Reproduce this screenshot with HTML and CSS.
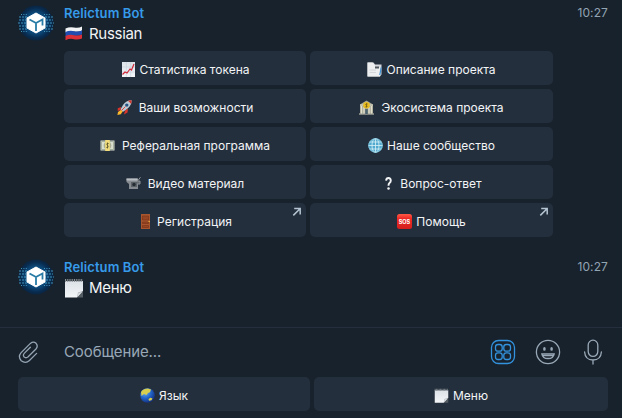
FILE: index.html
```html
<!DOCTYPE html>
<html lang="ru">
<head>
<meta charset="utf-8">
<title>Relictum Bot</title>
<link rel="stylesheet" href="styles.css">
</head>
<body>
<svg class="defs" aria-hidden="true">
  <defs>
    <radialGradient id="glow"><stop offset="0" stop-color="#2d8dbb"/><stop offset=".55" stop-color="#0d4d80"/><stop offset=".85" stop-color="#082c50"/><stop offset="1" stop-color="#0b2440"/></radialGradient>
    <linearGradient id="paper" x2="0" y2="1"><stop offset="0" stop-color="#dce2e8"/><stop offset="1" stop-color="#f4f6f8"/></linearGradient>
    <linearGradient id="red" x2="0" y2="1"><stop offset="0" stop-color="#ff5a48"/><stop offset=".3" stop-color="#ed2a24"/><stop offset="1" stop-color="#d5201e"/></linearGradient>
    <radialGradient id="sea" cx=".35" cy=".3" r=".75"><stop offset="0" stop-color="#6bb3f0"/><stop offset=".5" stop-color="#2467cc"/><stop offset="1" stop-color="#122c78"/></radialGradient>
  </defs>
  <symbol id="avatar" viewBox="0 0 36 36">
    <circle cx="18" cy="18" r="17.500" fill="url(#glow)"/>
    <g fill="none" stroke="#55b5dd" stroke-width="1.1" opacity=".75">
      <path d="M1 12h8M1 15h7M0 18h10M1 21h7M1 24h8M27 12h8M28 15h7M26 18h10M28 21h7M27 24h8" stroke-dasharray="2 1"/>
      <path d="M3 9.500h7M26 9.500h7M3 26.500h7M26 26.500h7" stroke-dasharray="1 1.4"/>
    </g>
    <path d="M18 8 27 13v10L18 28 9 23V13z" fill="#fff" stroke="#fff" stroke-linejoin="round"/>
    <path d="M11.500 14.500 18 18l6.500-3.500v6M18 18v8" fill="none" stroke="#287ca6" stroke-width="1.800"/>
  </symbol>
  <symbol id="note" viewBox="0 0 20 20">
    <path d="M1 3h18v10l-6 6.500H1z" fill="url(#paper)"/>
    <path d="M19 13l-6 6.500 1-5z" fill="#aab0b6"/><path d="M19 13l-6 6.500h6z" fill="#545c64"/><path d="M18.500 13.500l-5 5.500 .8-3.800z" fill="#dde1e5"/>
    <path d="M1 2.600h18" stroke="#8b9094" stroke-width="3" stroke-dasharray="1 .8"/>
  </symbol>
  <symbol id="arrow" viewBox="0 0 10 10"><path d="M2.200 1.500h6v6M8 1.700 1.300 8.400" fill="none" stroke="#b4c4d2" stroke-width="1.500"/></symbol>
</svg>

<main class="chat">
  <article class="message message--first">
    <svg class="avatar"><use href="#avatar"/></svg>
    <div class="content">
      <header class="head"><span class="name">Relictum Bot</span><time class="time">10:27</time></header>
      <p class="text">
        <svg class="emoji-lg" viewBox="0 0 20 20"><path d="M1.500 4.500q4-2 8.500-1t8-1v4q-4 2-8 1t-8.500 1z" fill="#f2f3f5"/><path d="M1.500 8q4-1.800 8.500-.8t8-.8v4.200q-4 1.600-8 .8t-8.500 1z" fill="#214db0"/><path d="M1.500 12q4-1.800 8.500-.8t8-.8v4q-4 1.800-8 .8t-8.500 1z" fill="#dc3039"/></svg>
        <span>Russian</span>
      </p>
      <div class="keyboard">
        <div class="button"><svg class="emoji" viewBox="0 0 15 15"><path d="M1 0h13v15H1z" fill="url(#paper)"/><path d="M1 5h13M1 10h13M5.300 0v15M9.700 0v15" stroke="#bfcbd8" stroke-width=".5"/><path d="M1.500 12.500 4 10l2 1 3-4 1.500 1L13 2" fill="none" stroke="#d02a3a" stroke-width="1.200"/></svg><span>Статистика токена</span></div>
        <div class="button"><svg class="emoji" viewBox="0 0 15 15"><path d="M.5.500h6l1.500 2h6.500v10l-1.500 2H.5z" fill="#d5d9de"/><path d="M.5.500h5L8 3.500v2h5v9H.5z" fill="#eceef0"/><path d="M8 4.500h4v2H8z" fill="#505860"/><path d="M2.500 8H9M2.500 10.500H9" stroke="#c8ccd0" stroke-width=".7"/><path d="M14.200 5.500 12.800 13" stroke="#4293d5" stroke-width="1.200"/></svg><span>Описание проекта</span></div>
        <div class="button button--wide"><svg class="emoji" viewBox="0 0 15 15"><path d="M4 7 .8 8.200.7 11l3-1zM8 10.500l-1 4 3.500-2 .5-4z" fill="#d8342b"/><path d="M4.500 9.500 1 12l-.6 3 3.400-.8L6 11z" fill="#fbb92b"/><path d="M14.700.3Q9 .5 6 5L3.600 9.200l2.500 2.500L10 9Q14.500 6 14.700.3z" fill="#bcc9d3"/><path d="M14.700.3 11 .8l3.200 3.200z" fill="#d8342b"/><circle cx="9.800" cy="5.100" r="1.700" fill="#245385"/><path d="m4.500 10.500 4-4" stroke="#de443a"/></svg><span>Ваши возможности</span></div>
        <div class="button button--wide"><svg class="emoji" viewBox="0 0 15 15"><path d="M7.500.5 14 4.500v9H1v-9z" fill="#a9aa98"/><path d="M1 5h13M0 14h15" stroke="#d7d5c2" stroke-width="1.200"/><path d="M2.500 6v7.500M12.500 6v7.500M5 7v6.500M10 7v6.500" stroke="#e2dfcc" stroke-width="1.300"/><path d="M6.200 9h2.600v5H6.200z" fill="#4d6570"/><circle cx="7.500" cy="5.300" r="3.300" fill="#e9bd1f"/><path d="M8.700 4H7q-1 .7.500 1.300t.300 1.500H6.300M7.500 3.200v4.200" fill="none" stroke="#715a18" stroke-width=".7"/></svg><span>Экосистема проекта</span></div>
        <div class="button button--wide"><svg class="emoji" viewBox="0 0 15 15"><path d="M.5 2.500h14v10H.5z" fill="#d9dfcf"/><path d="M1.500 3.500h12v8h-12z" fill="none" stroke="#9ba594" stroke-width=".8"/><circle cx="7.500" cy="7.500" r="3.800" fill="#a9ae94"/><path d="M5.200 2h4.600v11H5.200z" fill="#f1dc79"/><path d="M8.700 5.500H7q-.8.900.500 1.800t.3 2.200H6.300M7.500 4.500v6" fill="none" stroke="#4e4a28" stroke-width=".7"/></svg><span>Реферальная программа</span></div>
        <div class="button"><svg class="emoji" viewBox="0 0 15 15"><circle cx="7.500" cy="7.500" r="7.200" fill="#51a9cf"/><g fill="none" stroke="#d9f2f7" stroke-width=".8"><ellipse cx="7.500" cy="7.500" rx="3.500" ry="7"/><path d="M7.500.5v14M.5 7.500h14M1.500 4h12M1.500 11h12"/><circle cx="7.500" cy="7.500" r="6.800" stroke="#8dccdf"/></g></svg><span>Наше сообщество</span></div>
        <div class="button button--wide"><svg class="emoji" viewBox="0 0 15 15"><path d="M.5 2.500h11.500v10.500H3V8L.5 6z" fill="#858b91"/><path d="M.5 2.500h11v2H.5z" fill="#b9bec3"/><path d="M11 5h3v3h-3M12 4.500 14.500 1.200" fill="#646b71" stroke="#8b9197"/><path d="M5 6h6v5H5z" fill="#5b6268"/><circle cx="8" cy="8.500" r="1.700" fill="#252d33"/></svg><span>Видео материал</span></div>
        <div class="button button--question"><svg class="emoji" viewBox="0 0 15 15"><path d="M5.100 4.600Q5.300 2 7.500 2t2.300 2.600Q9.800 6.300 8.300 7.300 7.500 8 7.500 9.700" fill="none" stroke="#f2f4f5" stroke-width="1.900"/><circle cx="7.500" cy="12.600" r="1.250" fill="#f2f4f5"/></svg><span>Вопрос-ответ</span></div>
        <div class="button"><svg class="emoji" viewBox="0 0 15 15"><path d="M3 0h9v15H3z" fill="#a9552e"/><path d="M4.500 2h6v4h-6zM4.500 8h6v1.500h-6zM4.500 11.500h6v2h-6z" fill="#984523" stroke="#753316" stroke-width=".6"/><circle cx="11.200" cy="7.500" r=".8" fill="#e4b13d"/></svg><span>Регистрация</span><svg class="link"><use href="#arrow"/></svg></div>
        <div class="button"><svg class="emoji" viewBox="0 0 15 15"><rect width="15" height="15" rx="2.500" fill="url(#red)"/><text class="sos" x="7.500" y="9.700" text-anchor="middle">SOS</text></svg><span>Помощь</span><svg class="link"><use href="#arrow"/></svg></div>
      </div>
    </div>
  </article>

  <article class="message">
    <svg class="avatar"><use href="#avatar"/></svg>
    <div class="content">
      <header class="head"><span class="name">Relictum Bot</span><time class="time">10:27</time></header>
      <p class="text"><svg class="emoji-lg"><use href="#note"/></svg><span>Меню</span></p>
    </div>
  </article>
</main>

<footer class="composer">
  <div class="entry">
    <svg class="clip" viewBox="0 0 24 26"><path d="M20.300 14.500 12.500 22.300Q8.200 26.100 3.500 22.500-.3 18.200 3.200 13.900L13.500 3.600Q16.800 1 19.700 3.500 22.300 6.600 19.600 9.700L10.800 18.500Q8.700 20 6.700 18.500 5 16.500 6.800 14.500L13.500 7.800"/></svg>
    <span class="placeholder">Сообщение...</span>
    <svg class="tool tool--active" viewBox="0 0 26 26"><rect x="1.500" y="1.500" width="23" height="23" rx="7"/><rect x="5.500" y="5.500" width="6.700" height="6.700" rx="2.500"/><rect x="13.800" y="5.500" width="6.700" height="6.700" rx="2.500"/><rect x="5.500" y="13.800" width="6.700" height="6.700" rx="2.500"/><rect x="13.800" y="13.800" width="6.700" height="6.700" rx="2.500"/></svg>
    <svg class="tool" viewBox="0 0 26 26"><circle cx="13" cy="13" r="11.600"/><path d="M6.800 14.800h12.400Q18.300 19.500 13 19.500T6.800 14.800zM8 16.500h10"/><ellipse class="eye" cx="9.400" cy="9.900" rx="1.300" ry="1.900"/><ellipse class="eye" cx="16.600" cy="9.900" rx="1.300" ry="1.900"/></svg>
    <svg class="tool" viewBox="0 0 26 26"><rect x="8.200" y="1.200" width="9.600" height="16.200" rx="4.800"/><path d="M4.600 13Q5.200 21 13 21T21.400 13M13 21v4"/></svg>
  </div>
  <div class="menu">
    <div class="button"><svg class="emoji" viewBox="0 0 15 15"><circle cx="7.500" cy="7.500" r="7.300" fill="url(#sea)"/><path d="M1 4Q3 .5 8 .4l3 1-1 2.800-2 .8-1.500 2L4 6 1.500 8zM8.500 11l2-1.200 2 .7-1 1.800-2.500.4z" fill="#d9cf4e"/></svg><span>Язык</span></div>
    <div class="button"><svg class="emoji"><use href="#note"/></svg><span>Меню</span></div>
  </div>
</footer>
</body>
</html>
```
FILE: styles.css
```css
* { box-sizing: border-box; }
body {
  margin: 0;
  width: 622px;
  height: 418px;
  overflow: hidden;
  display: flex;
  flex-direction: column;
  background: #18222c;
  color: #f2f4f6;
  font-family: Inter, "Noto Sans", sans-serif;
}
svg { display: block; flex: none; }
.defs { position: absolute; width: 0; height: 0; }
.chat { height: 327px; padding: 4px 14px 0 18px; }
.message { display: flex; gap: 10px; }
.message--first { height: 254px; }
.avatar { width: 36px; height: 36px; margin-top: 1px; }
.content { flex: 1; }
.head { display: flex; justify-content: space-between; height: 19px; line-height: 19px; }
.name { color: #369bea; font-size: 13px; font-weight: 600; letter-spacing: .1px; }
.time { color: #93a4b3; font-size: 12px; line-height: 18px; letter-spacing: .1px; }
.text { display: flex; align-items: center; gap: 5px; height: 21px; margin: 0; font-size: 15px; line-height: 21px; letter-spacing: -.3px; }
.emoji-lg { width: 20px; height: 20px; }
.keyboard {
  display: grid;
  grid-template-columns: 242px 243px;
  grid-auto-rows: 34px;
  gap: 4px;
  margin-top: 7px;
}
.button {
  position: relative;
  display: flex;
  align-items: center;
  justify-content: center;
  gap: 4px;
  padding-top: 3px;
  border-radius: 5px;
  background: #242f3d;
  font-size: 12px;
  line-height: 16px;
  white-space: nowrap;
}
.button--wide { gap: 7px; }
.emoji { width: 15px; height: 15px; }
.link { position: absolute; top: 4px; right: 4px; width: 10px; height: 10px; }
.sos { fill: #fff; font-size: 5.500px; font-weight: 700; letter-spacing: 0; }
.composer { flex: none; height: 91px; padding: 0 14px 0 18px; border-top: 1px solid #232f3c; }
.entry { display: flex; align-items: center; height: 49px; padding: 0 2px 2px 0; }
.clip { width: 22px; height: 26px; fill: none; stroke: #95a5b4; stroke-width: 1.400; stroke-linecap: round; }
.placeholder { flex: 1; margin-left: 24px; color: #98a8b7; font-size: 15px; letter-spacing: -.1px; }
.tool { width: 26px; height: 26px; margin-left: 19px; fill: none; stroke: #9aa9b7; stroke-width: 1.300; stroke-linecap: round; }
.tool--active { stroke: #3292dd; }
.eye { fill: #9aa9b7; stroke: none; }
.menu { display: grid; grid-template-columns: 292px 294px; grid-auto-rows: 34px; gap: 4px; }
```
